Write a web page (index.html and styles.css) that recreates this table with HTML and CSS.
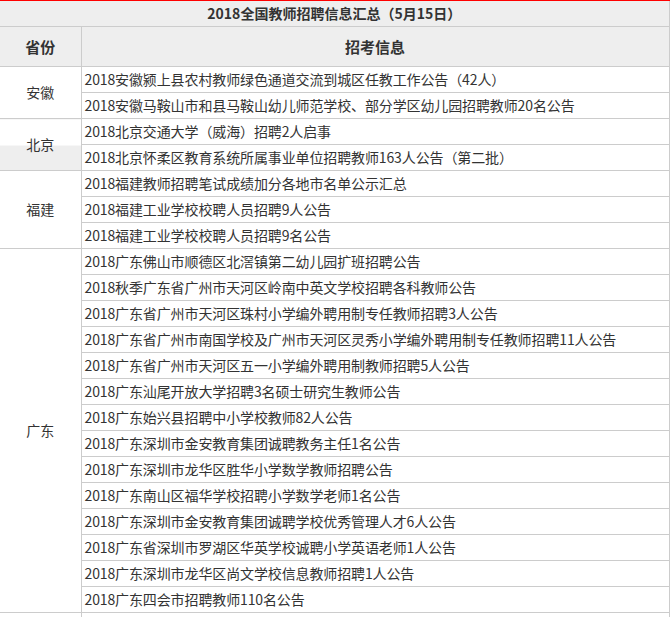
FILE: index.html
```html
<!DOCTYPE html>
<html lang="zh-CN">
<head>
<meta charset="utf-8">
<title>2018全国教师招聘信息汇总（5月15日）</title>
<link rel="stylesheet" href="styles.css">
</head>
<body>
<div class="wrap">
<table class="info">
  <colgroup><col class="col-prov"><col class="col-info"></colgroup>
  <tr class="title-row"><td colspan="2" class="title">2018全国教师招聘信息汇总（5月15日）</td></tr>
  <tr class="head-row"><td class="prov head">省份</td><td class="head center">招考信息</td></tr>
  <tr><td class="prov" rowspan="2">安徽</td><td>2018安徽颍上县农村教师绿色通道交流到城区任教工作公告（42人）</td></tr>
  <tr><td>2018安徽马鞍山市和县马鞍山幼儿师范学校、部分学区幼儿园招聘教师20名公告</td></tr>
  <tr><td class="prov half" rowspan="2">北京</td><td>2018北京交通大学（威海）招聘2人启事</td></tr>
  <tr><td>2018北京怀柔区教育系统所属事业单位招聘教师163人公告（第二批）</td></tr>
  <tr><td class="prov" rowspan="3">福建</td><td>2018福建教师招聘笔试成绩加分各地市名单公示汇总</td></tr>
  <tr><td>2018福建工业学校校聘人员招聘9人公告</td></tr>
  <tr><td>2018福建工业学校校聘人员招聘9名公告</td></tr>
  <tr><td class="prov" rowspan="14">广东</td><td>2018广东佛山市顺德区北滘镇第二幼儿园扩班招聘公告</td></tr>
  <tr><td>2018秋季广东省广州市天河区岭南中英文学校招聘各科教师公告</td></tr>
  <tr><td>2018广东省广州市天河区珠村小学编外聘用制专任教师招聘3人公告</td></tr>
  <tr><td>2018广东省广州市南国学校及广州市天河区灵秀小学编外聘用制专任教师招聘11人公告</td></tr>
  <tr><td>2018广东省广州市天河区五一小学编外聘用制教师招聘5人公告</td></tr>
  <tr><td>2018广东汕尾开放大学招聘3名硕士研究生教师公告</td></tr>
  <tr><td>2018广东始兴县招聘中小学校教师82人公告</td></tr>
  <tr><td>2018广东深圳市金安教育集团诚聘教务主任1名公告</td></tr>
  <tr><td>2018广东深圳市龙华区胜华小学数学教师招聘公告</td></tr>
  <tr><td>2018广东南山区福华学校招聘小学数学老师1名公告</td></tr>
  <tr><td>2018广东深圳市金安教育集团诚聘学校优秀管理人才6人公告</td></tr>
  <tr><td>2018广东省深圳市罗湖区华英学校诚聘小学英语老师1人公告</td></tr>
  <tr><td>2018广东深圳市龙华区尚文学校信息教师招聘1人公告</td></tr>
  <tr><td>2018广东四会市招聘教师110名公告</td></tr>
  <tr><td class="prov"></td><td></td></tr>
</table>
</div>
</body>
</html>
```

FILE: styles.css
```css
html, body {
  margin: 0;
  padding: 0;
  background: #fff;
}
.wrap {
  width: 670px;
  border-top: 1px solid #f00;
}
.info {
  width: 669px;
  border-collapse: collapse;
  table-layout: fixed;
  font-family: "Noto Sans CJK SC", "Liberation Sans", sans-serif;
  font-size: 14px;
  color: #333;
}
.col-prov {
  width: 81px;
}
.col-info {
  width: 588px;
}
.info td {
  border: 1px solid #ccc;
  height: 25px;
  padding: 0 0 0 3px;
  line-height: 25px;
  letter-spacing: -0.12px;
  white-space: nowrap;
  overflow: hidden;
  box-sizing: border-box;
}
.info td.prov {
  border-left: none;
  text-align: center;
  padding: 0;
  letter-spacing: 0;
}
.info tr:first-child td {
  border-top: none;
}
.info td.title {
  border-left: none;
  background: #eee;
  text-align: center;
  font-weight: bold;
  padding: 0;
  letter-spacing: 0;
}
.head-row td {
  height: 40px;
  background: #eee;
  font-weight: bold;
  font-size: 15px;
}
.info td.center {
  text-align: center;
  padding: 0;
  letter-spacing: 0;
}
.info td.half {
  background: linear-gradient(#fff 26px, #eee 26px);
}
```
